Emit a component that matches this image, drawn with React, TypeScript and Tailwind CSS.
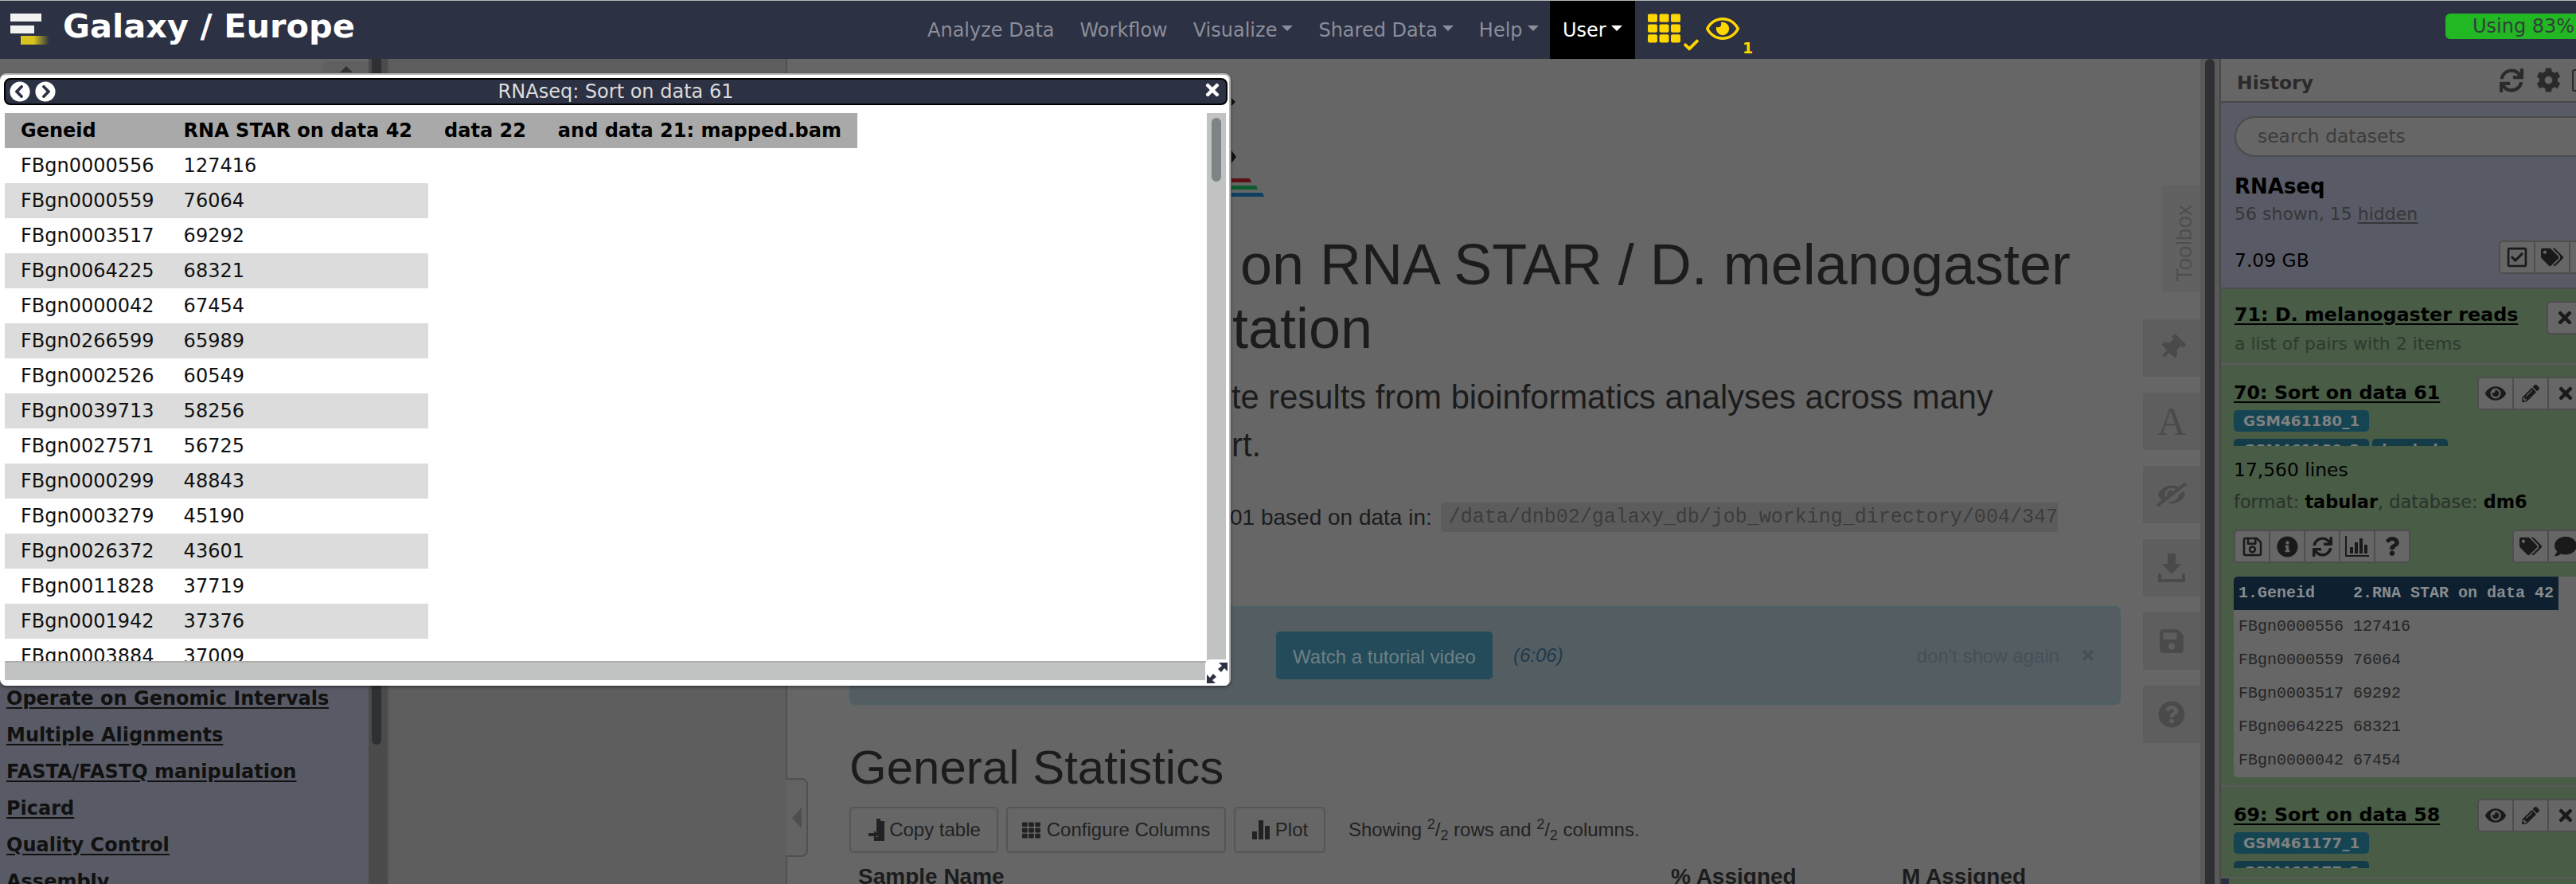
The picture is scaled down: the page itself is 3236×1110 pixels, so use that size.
import type { ReactNode } from "react";
import {
  FaChevronCircleLeft,
  FaChevronCircleRight,
  FaCheck,
  FaCog,
  FaComment,
  FaEye,
  FaEyeSlash,
  FaInfoCircle,
  FaPencilAlt,
  FaQuestion,
  FaQuestionCircle,
  FaRegCheckSquare,
  FaRegEye,
  FaRegSave,
  FaSave,
  FaSync,
  FaTags,
  FaTh,
  FaThumbtack,
  FaTimes,
} from "react-icons/fa";

const rows = [
  ["FBgn0000556", "127416"],
  ["FBgn0000559", "76064"],
  ["FBgn0003517", "69292"],
  ["FBgn0064225", "68321"],
  ["FBgn0000042", "67454"],
  ["FBgn0266599", "65989"],
  ["FBgn0002526", "60549"],
  ["FBgn0039713", "58256"],
  ["FBgn0027571", "56725"],
  ["FBgn0000299", "48843"],
  ["FBgn0003279", "45190"],
  ["FBgn0026372", "43601"],
  ["FBgn0011828", "37719"],
  ["FBgn0001942", "37376"],
  ["FBgn0003884", "37009"],
];

const toolSections = [
  "Operate on Genomic Intervals",
  "Multiple Alignments",
  "FASTA/FASTQ manipulation",
  "Picard",
  "Quality Control",
  "Assembly",
];

function Caret({ white }: { white?: boolean }) {
  return (
    <span
      className={
        white
          ? "ml-[6px] mb-[4px] h-0 w-0 border-x-[7px] border-t-[7px] border-x-transparent border-t-white"
          : "ml-[6px] mb-[4px] h-0 w-0 border-x-[7px] border-t-[7px] border-x-transparent border-t-[#8b8e9b]"
      }
    />
  );
}

function NavItem({ label, caret }: { label: string; caret?: boolean }) {
  return (
    <div className="flex h-full items-center px-4 whitespace-nowrap text-[#8b8e9b]">
      <span>{label}</span>
      {caret && <Caret />}
    </div>
  );
}

function ChartIcon() {
  return (
    <svg width="30" height="26" viewBox="0 0 30 26" fill="currentColor">
      <path d="M0 0h2v24h28v2H0z" />
      <rect x="6" y="14" width="4" height="8" />
      <rect x="12" y="8" width="4" height="14" />
      <rect x="18" y="3" width="4" height="19" />
      <rect x="24" y="11" width="4" height="11" />
    </svg>
  );
}

function IconGroup({ icons }: { icons: ReactNode[] }) {
  return (
    <div className="flex h-[42px] shrink-0 rounded-[5px] border-2 border-[#4e4e4e] bg-[#666666] text-[#1a1a1a]">
      {icons.map((icon, i) => (
        <div
          key={i}
          className={
            i === 0
              ? "flex w-[42px] items-center justify-center"
              : "flex w-[44px] items-center justify-center border-l-2 border-[#4e4e4e]"
          }
        >
          {icon}
        </div>
      ))}
    </div>
  );
}

function SampleTag({ label, clipped }: { label: string; clipped?: boolean }) {
  return (
    <span
      className={
        clipped
          ? "flex h-[27px] items-center rounded-[5px] bg-[#133b48] px-[12px] text-[18.5px] font-bold text-[#7b7f80]"
          : "flex h-[27px] items-center rounded-[5px] bg-[#154553] px-[12px] text-[18.5px] font-bold text-[#808080]"
      }
    >
      {label}
    </span>
  );
}

const itemActions = [<FaEye key="e" size={26} />, <FaPencilAlt key="p" size={22} />, <FaTimes key="x" size={24} />];

function HistoryTitle({ title }: { title: string }) {
  return <span className="text-[23.8px] font-bold text-black underline underline-offset-[3px]">{title}</span>;
}

function Rail() {
  const buttons = [
    <FaThumbtack key="pin" size={32} className="rotate-45" />,
    <span key="font" className="text-[50px] leading-none [font-family:'Liberation_Serif',serif]">
      A
    </span>,
    <FaEyeSlash key="eye" size={38} className="-scale-x-100" />,
    <svg key="dl" width="34" height="36" viewBox="0 0 34 36" fill="currentColor">
      <path d="M12 0h10v13h7L17 26 5 13h7z" />
      <path d="M0 25h4v7h26v-7h4v11H0z" />
    </svg>,
    <FaSave key="save" size={34} />,
    <FaQuestionCircle key="q" size={34} />,
  ];
  return (
    <div className="flex w-[72px] shrink-0 flex-col items-end pt-[159px] text-[#4a4a4a]">
      <div className="flex h-[134px] w-[48px] items-end justify-center bg-[#616161] pb-[13px] pl-[8px]">
        <span className="rotate-180 text-[28px] leading-none text-[#4e4e4e] [font-family:'Liberation_Sans',sans-serif] [writing-mode:vertical-rl]">
          Toolbox
        </span>
      </div>
      <div className="mt-[34px] flex flex-col gap-[20px]">
        {buttons.map((icon, i) => (
          <div key={i} className="flex h-[72px] w-[72px] items-center justify-center bg-[#5e5e5e]">
            {icon}
          </div>
        ))}
      </div>
    </div>
  );
}

function CenterPanel() {
  return (
    <div className="flex min-w-0 flex-1 border-l-2 border-[#505050] bg-[#666666] [font-family:'Liberation_Sans',Arial,sans-serif]">
      <div className="min-w-0 flex-1 pl-[78px] text-[#1c1c1c]">
        {/* report logo, mostly under the dataset window */}
        <svg className="ml-[480px] block" width="60" height="218" viewBox="0 0 60 218">
          <path d="M0 49l5 5-5 5z" fill="#111" />
          <path d="M0 115l6 8-6 8z" fill="#111" />
          <path d="M0 150h23l2 5H0z" fill="#5a1015" />
          <path d="M0 159h31l2 5H0z" fill="#0e5a30" />
          <path d="M0 168h39l2 5H0z" fill="#10405f" />
        </svg>
        <h1 className="h-[160px] text-[72px] leading-[80px]">
          <div className="ml-[491px] whitespace-nowrap">on RNA STAR / D. melanogaster</div>
          <div className="ml-[481px]">tation</div>
        </h1>
        <div className="mt-[17px] h-[120px] text-[41.7px] leading-[60px]">
          <div className="ml-[480px] whitespace-nowrap">te results from bioinformatics analyses across many</div>
          <div className="ml-[480px]">rt.</div>
        </div>
        <div className="mt-[42px] flex h-[37px] items-center whitespace-nowrap text-[28px]">
          <span className="ml-[478px]">01 based on data in:</span>
          <code className="ml-[11px] flex h-[37px] items-center rounded-l-[5px] bg-[#5c5c5c] pl-[10px] text-[25px] text-[#3c3c3c] [font-family:'Liberation_Mono',monospace]">
            /data/dnb02/galaxy_db/job_working_directory/004/347
          </code>
        </div>
        <div className="mt-[93px] flex h-[124px] w-[1597px] items-center rounded-[7px] border-2 border-[#4c6066] bg-[#545e62] text-[24px] whitespace-nowrap">
          <span className="ml-[534px] flex h-[60px] w-[272px] shrink-0 items-center justify-center rounded-[5px] bg-[#234b5a] pt-[4px] text-[#6d7f85]">
            Watch a tutorial video
          </span>
          <em className="ml-[26px] text-[#1f3a4c]">(6:06)</em>
          <span className="ml-[444px] pt-[2px] text-[#445058]">don't show again</span>
          <FaTimes className="ml-[26px] text-[#445058]" size={20} />
        </div>
        <h2 className="mt-[44px] text-[60px] leading-[70px]">General Statistics</h2>
        <div className="mt-[14px] flex h-[58px] items-center gap-[10px] text-[24px] text-[#222]">
          <span className="flex h-[58px] w-[187px] items-center justify-center gap-[4px] rounded-[5px] border-2 border-[#555]">
            <svg width="24" height="28" viewBox="0 0 24 28" fill="currentColor">
              <path d="M12 0h5v3h5v25H9v-5h5l-2-3V3z" />
              <path d="M2 18h7v-3l5 5-5 5v-3H2z" />
            </svg>
            Copy table
          </span>
          <span className="flex h-[58px] w-[276px] items-center justify-center gap-[8px] rounded-[5px] border-2 border-[#555]">
            <FaTh size={23} />
            Configure Columns
          </span>
          <span className="flex h-[58px] w-[115px] items-center justify-center gap-[6px] rounded-[5px] border-2 border-[#555]">
            <svg width="24" height="24" viewBox="0 0 24 24" fill="currentColor">
              <rect x="1" y="14" width="6" height="10" />
              <rect x="9" y="0" width="6" height="24" />
              <rect x="17" y="7" width="6" height="17" />
            </svg>
            Plot
          </span>
          <span className="ml-[19px] whitespace-nowrap">
            Showing <sup>2</sup>/<sub>2</sub> rows and <sup>2</sup>/<sub>2</sub> columns.
          </span>
        </div>
        <div className="mt-[9px] flex text-[28px] font-bold whitespace-nowrap">
          <span className="ml-[11px] w-[1021px]">Sample Name</span>
          <span className="w-[290px]">% Assigned</span>
          <span>M Assigned</span>
        </div>
      </div>
      <Rail />
    </div>
  );
}

function HistoryPanel() {
  return (
    <div className="flex h-full w-[446px] shrink-0 flex-col overflow-hidden bg-[#485c46] text-black">
      <div className="flex h-[55px] shrink-0 items-center border-b-2 border-[#484848] bg-[#666666] pl-[20px] text-[#2a2a2a]">
        <span className="mt-[8px] text-[23.5px] font-bold">History</span>
        <FaSync className="ml-[234px] shrink-0" size={30} />
        <FaCog className="ml-[16px] shrink-0" size={31} />
        <span className="ml-[14px] h-[28px] w-[20px] shrink-0 rounded-[3px] border-2 border-[#2a2a2a]" />
      </div>
      <div className="h-[234px] shrink-0 border-b-2 border-[#4d4d4d] bg-[#585b66] pl-[17px]">
        <div className="mt-[17px] flex h-[51px] w-[460px] items-center rounded-full border-2 border-[#4b4b4b] bg-[#666666] pl-[27px] text-[23.4px] text-[#3c3c3c]">
          search datasets
        </div>
        <div className="mt-[22px] text-[26px] leading-[30px] font-bold">RNAseq</div>
        <div className="mt-[5px] text-[22px] leading-[30px] text-[#363636]">
          56 shown, 15 <span className="underline underline-offset-[3px]">hidden</span>
        </div>
        <div className="mt-[16px] flex w-[466px] items-center justify-between">
          <span className="mt-[10px] text-[23.4px]">7.09 GB</span>
          <IconGroup
            icons={[
              <FaRegCheckSquare key="c" size={28} />,
              <FaTags key="t" size={28} />,
              <FaComment key="m" size={26} />,
            ]}
          />
        </div>
      </div>
      <div className="h-[95px] shrink-0 border-b-2 border-[#5a5a5a] pl-[17px]">
        <div className="mt-[15px] flex h-[42px] w-[438px] items-start justify-between">
          <HistoryTitle title="71: D. melanogaster reads" />
          <IconGroup icons={[<FaTimes key="x" size={24} />]} />
        </div>
        <div className="mt-[-3px] text-[22px] leading-[30px] text-[#2f3a2e]">a list of pairs with 2 items</div>
      </div>
      <div className="h-[530px] shrink-0 border-b-2 border-[#5a5a5a] pl-[16px]">
        <div className="mt-[15px] flex h-[42px] w-[440px] items-center justify-between">
          <HistoryTitle title="70: Sort on data 61" />
          <IconGroup icons={itemActions} />
        </div>
        <div className="flex">
          <SampleTag label="GSM461180_1" />
        </div>
        <div className="mt-[9px] flex h-[9px] gap-[4px] overflow-hidden">
          <SampleTag label="GSM461180_2" clipped />
          <SampleTag label="loaded" clipped />
        </div>
        <div className="mt-[14px] text-[23.4px] leading-[32px]">17,560 lines</div>
        <div className="mt-[8px] text-[22.4px] leading-[32px] whitespace-nowrap text-[#2a322a]">
          format: <b className="text-black">tabular</b>, database: <b className="text-black">dm6</b>
        </div>
        <div className="mt-[19px] flex w-[440px] justify-between">
          <IconGroup
            icons={[
              <FaRegSave key="s" size={27} />,
              <FaInfoCircle key="i" size={27} />,
              <FaSync key="r" size={25} />,
              <ChartIcon key="c" />,
              <FaQuestion key="q" size={24} />,
            ]}
          />
          <IconGroup icons={[<FaTags key="t" size={28} />, <FaComment key="m" size={28} />]} />
        </div>
        <div className="mt-[17px] h-[252px] overflow-hidden rounded-l-[5px] bg-[#666666] whitespace-pre text-[20px] [font-family:'Liberation_Mono',monospace]">
          <div className="flex h-[42px] w-[408px] items-center bg-[#0e2030] pl-[6px] font-bold text-[#888c90]">
            1.Geneid    2.RNA STAR on data 42
          </div>
          {rows.slice(0, 5).map(([id, value]) => (
            <div key={id} className="flex h-[42px] items-center pl-[6px] text-[#252525]">
              {id} {value}
            </div>
          ))}
        </div>
      </div>
      <div className="h-[115px] shrink-0 border-b-2 border-[#5a5a5a] pl-[16px]">
        <div className="mt-[15px] flex h-[42px] w-[440px] items-center justify-between">
          <HistoryTitle title="69: Sort on data 58" />
          <IconGroup icons={itemActions} />
        </div>
        <div className="flex">
          <SampleTag label="GSM461177_1" />
        </div>
        <div className="mt-[9px] flex h-[9px] overflow-hidden">
          <SampleTag label="GSM461177_2" clipped />
        </div>
      </div>
      <div className="h-[10px] w-[10px] shrink-0 bg-[#2a2f42]" />
    </div>
  );
}

function DatasetWindow() {
  return (
    <div className="absolute top-[91px] left-0 h-[769px] w-[1546px] rounded-[8px] border-t-2 border-r-2 border-[#b5b5b5] bg-white pt-[4px] pl-[5px] shadow-[0_2px_4px_rgba(0,0,0,0.4)] [font-family:'DejaVu_Sans',sans-serif]">
      <div className="flex h-[34px] w-[1537px] items-center rounded-[8px] border-2 border-black bg-[#2c3143] pl-[5px] text-white">
        <FaChevronCircleLeft className="shrink-0" size={26} />
        <FaChevronCircleRight className="ml-[6px] shrink-0" size={26} />
        <span className="ml-[230px] w-[947px] text-center text-[24px] leading-none whitespace-nowrap text-[#dcdcdc]">
          RNAseq: Sort on data 61
        </span>
        <FaTimes className="mr-[5px] mb-[4px] ml-auto" size={24} />
      </div>
      <div className="mt-[10px] ml-[1px] flex h-[712px] w-[1534px]">
        <div className="flex w-[1510px] flex-col">
          <div className="h-[688px] overflow-hidden">
            <table className="border-collapse text-[24px] whitespace-nowrap text-[#111]">
              <thead>
                <tr className="h-[44px] bg-[#a9a9a9] text-left text-black">
                  <th className="pr-[17px] pl-[20px]">Geneid</th>
                  <th className="px-[20px]">RNA STAR on data 42</th>
                  <th className="px-[20px]">data 22</th>
                  <th className="px-[20px]">and data 21: mapped.bam</th>
                </tr>
              </thead>
              <tbody>
                {rows.map(([id, value], i) => (
                  <tr key={id} className="h-[44px]">
                    <td className={i % 2 === 1 ? "bg-[#dcdcdc] pr-[17px] pl-[20px]" : "pr-[17px] pl-[20px]"}>{id}</td>
                    <td className={i % 2 === 1 ? "bg-[#dcdcdc] px-[20px]" : "px-[20px]"}>{value}</td>
                  </tr>
                ))}
              </tbody>
            </table>
          </div>
          <div className="h-[24px] border-t-2 border-[#aeaeaa] bg-[#c1c3c2]" />
        </div>
        <div className="h-[688px] w-[24px] bg-[#c1c3c2] pt-[6px] pl-[6px]">
          <div className="h-[80px] w-[12px] rounded-full bg-[#7e8385]" />
        </div>
      </div>
      {/* resize grip */}
      <div className="absolute top-[734px] left-[1514px] flex h-[33px] w-[30px] items-center justify-center rounded-tl-[6px] rounded-br-[6px] bg-white">
        <svg width="26" height="26" viewBox="0 0 26 26" fill="#2c3143">
          <path d="M26 0v11l-4-4-4 5-4-4 5-4-4-4z" />
          <path d="M0 26V15l4 4 4-5 4 4-5 4 4 4z" />
        </svg>
      </div>
    </div>
  );
}

export default function App() {
  return (
    <div className="relative flex h-[1110px] w-[3236px] flex-col overflow-hidden border-t border-[#b9b9b9] bg-[#666666] [font-family:'DejaVu_Sans',sans-serif]">
      <header className="flex h-[73px] shrink-0 bg-[#2c3143] text-[24px]">
        <div className="flex w-[1149px] shrink-0 items-start">
          <svg className="mt-[14px] ml-[12px]" width="52" height="44" viewBox="0 0 52 44">
            <defs>
              <linearGradient id="logoFade">
                <stop offset="0.45" stopColor="#d8c41e" />
                <stop offset="1" stopColor="#2c3143" />
              </linearGradient>
            </defs>
            <rect x="1" y="2" width="39" height="10" fill="#f2f2f2" />
            <rect x="1" y="17" width="30" height="10" fill="#f2f2f2" />
            <rect x="14" y="30" width="36" height="11" fill="url(#logoFade)" />
          </svg>
          <span className="mt-[8px] ml-[15px] text-[41.5px] leading-[48px] font-bold whitespace-nowrap text-white">
            Galaxy / Europe
          </span>
        </div>
        <nav className="flex h-full w-[798px] shrink-0">
          <NavItem label="Analyze Data" />
          <NavItem label="Workflow" />
          <NavItem label="Visualize" caret />
          <NavItem label="Shared Data" caret />
          <NavItem label="Help" caret />
        </nav>
        <div className="flex h-full w-[107px] shrink-0 items-center bg-black pl-[16px] text-white">
          <span>User</span>
          <Caret white />
        </div>
        <FaTh className="mt-[14px] ml-[16px] shrink-0 text-[#ffd700]" size={41} />
        <FaCheck className="mt-[46px] ml-[4px] shrink-0 text-[#ffd700]" size={19} />
        <FaRegEye className="mt-[14px] ml-[9px] shrink-0 text-[#ffd700]" size={42} />
        <span className="mt-[47px] ml-[4px] text-[19px] leading-[24px] font-bold text-[#ffd700]">1</span>
        <div className="mt-[16px] ml-auto flex h-[32px] w-[164px] shrink-0 items-center rounded-l-[6px] bg-[#22b823] pl-[34px] text-[24px] whitespace-nowrap text-[#32403a]">
          Using 83%
        </div>
      </header>
      <main className="flex min-h-0 flex-1">
        <div className="flex w-[488px] shrink-0 border-r-2 border-[#505050]">
          <div className="flex w-[463px] shrink-0 flex-col">
            <div className="h-[60px] shrink-0 bg-[#666666] pt-[3px] pl-[405px]">
              <div className="flex h-[14px] w-[60px] items-end justify-center rounded-t-[6px] bg-[#606060]">
                <span className="h-0 w-0 border-x-[8px] border-b-[8px] border-x-transparent border-b-[#333]" />
              </div>
            </div>
            <div className="flex-1 bg-[#585b66] pt-[720px] pl-[8px] text-[24px] font-bold whitespace-nowrap text-[#111]">
              {toolSections.map((name) => (
                <div key={name} className="h-[46px] leading-[46px] underline underline-offset-[3px]">
                  {name}
                </div>
              ))}
            </div>
          </div>
          <div className="flex-1 bg-[#4b4b4b] pl-[4px]">
            <div className="h-[861px] w-[12px] rounded-b-full bg-[#2f3033]" />
          </div>
        </div>
        <div className="relative w-[499px] shrink-0 bg-[#5e5e5e]">
          <div className="absolute top-[903px] left-[499px] z-10 flex h-[99px] w-[28px] items-center rounded-r-[8px] border-y-2 border-r-2 border-[#505050] bg-[#636363] pl-[8px]">
            <span className="h-0 w-0 border-y-[13px] border-r-[12px] border-y-transparent border-r-[#4e4e4e]" />
          </div>
        </div>
        <CenterPanel />
        <div className="flex w-[26px] shrink-0 bg-[#595959]">
          <div className="ml-[6px] w-[12px] rounded-t-full bg-[#2f3033]" />
          <div className="ml-[6px] w-[2px] bg-[#484848]" />
        </div>
        <HistoryPanel />
      </main>
      <DatasetWindow />
    </div>
  );
}
